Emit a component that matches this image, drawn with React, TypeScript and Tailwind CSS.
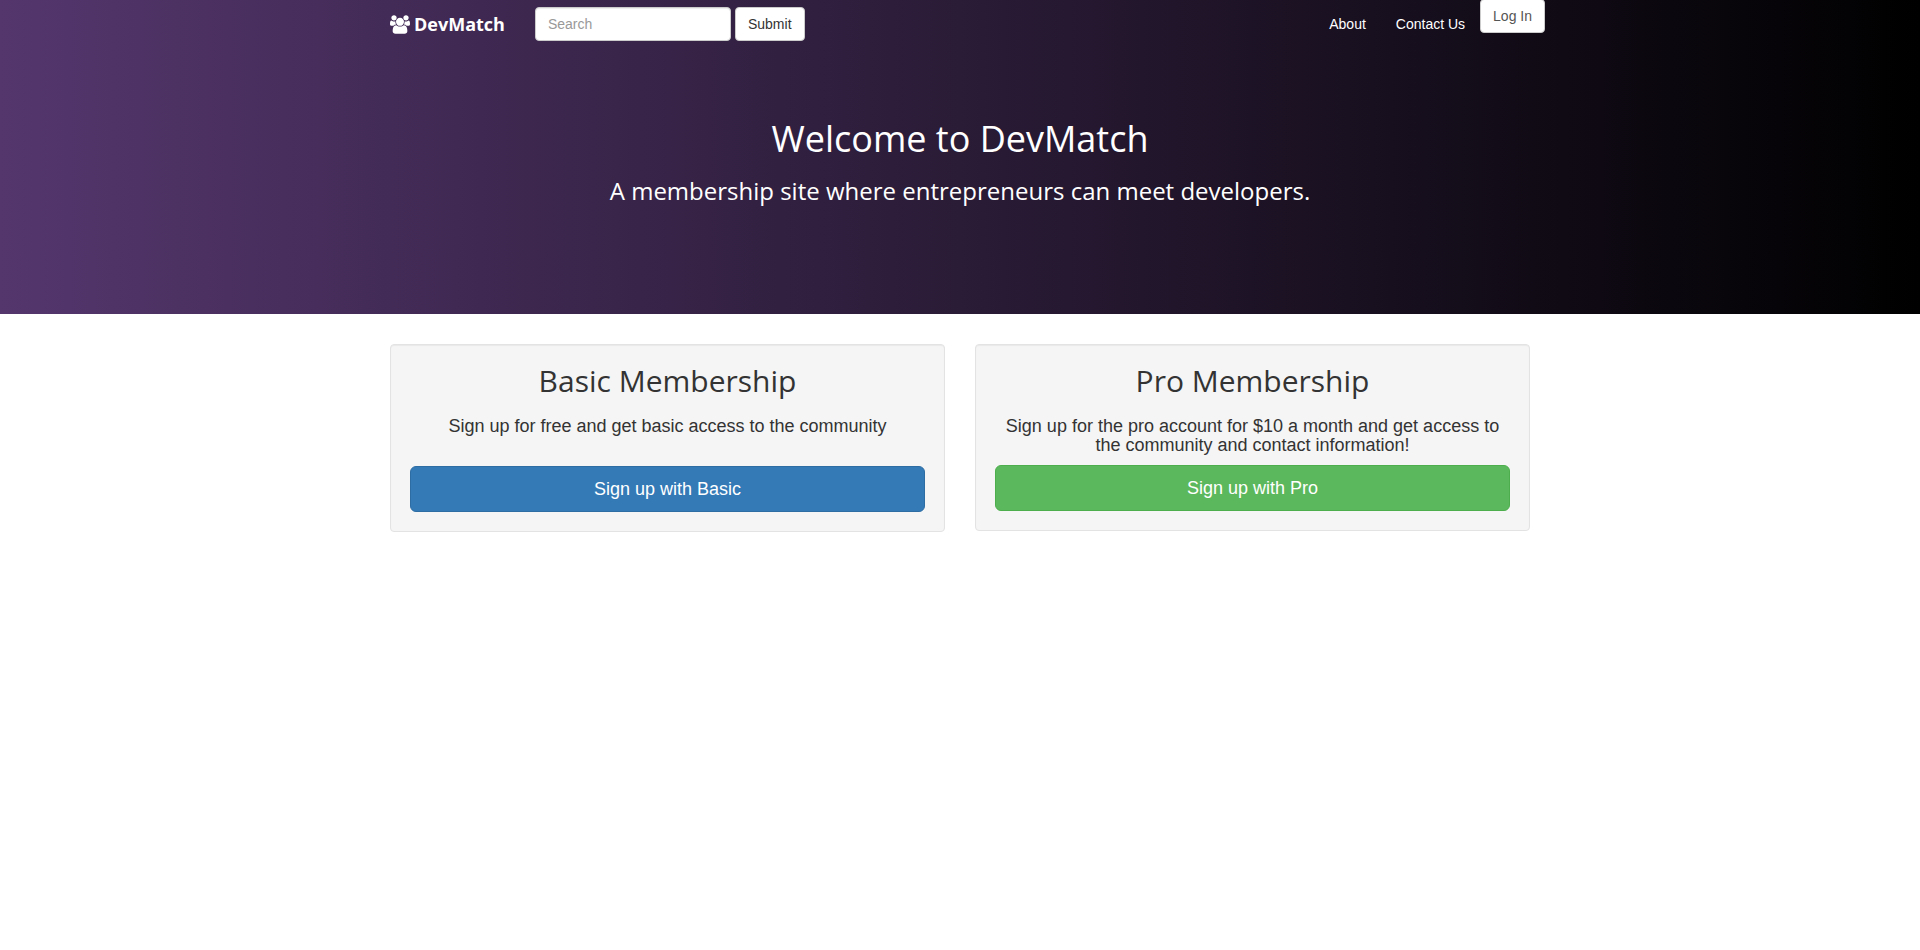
import React from "react";

const smallButton =
  "inline-block rounded-sm border border-[#cccccc] bg-white px-3 py-1.5 text-sm leading-5";

function UsersIcon() {
  return (
    <svg viewBox="0 0 1920 1792" className="h-[19px] w-5" fill="currentColor" aria-hidden="true">
      <path d="M593 896q-162 5-265 128h-134q-82 0-138-40.5t-56-118.5q0-353 124-353 6 0 43.5 21t97.5 42.5 119 21.5q67 0 133-23-5 37-5 66 0 139 81 256zM1664 1533q0 120-73 189.5t-194 69.5h-874q-121 0-194-69.5t-73-189.5q0-53 3.5-103.5t14-109 26.5-108.5 43-97.5 62-81 85.5-53.5 111.5-20q10 0 43 21.5t73 48 107 48 135 21.5 135-21.5 107-48 73-48 43-21.5q61 0 111.5 20t85.5 53.5 62 81 43 97.5 26.5 108.5 14 109 3.5 103.5zM640 256q0 106-75 181t-181 75-181-75-75-181 75-181 181-75 181 75 75 181zM1344 640q0 159-112.5 271.5t-271.5 112.5-271.5-112.5-112.5-271.5 112.5-271.5 271.5-112.5 271.5 112.5 112.5 271.5zM1920 865q0 78-56 118.5t-138 40.5h-134q-103-123-265-128 81-117 81-256 0-29-5-66 66 23 133 23 59 0 119-21.5t97.5-42.5 43.5-21q124 0 124 353zM1792 256q0 106-75 181t-181 75-181-75-75-181 75-181 181-75 181 75 75 181z" />
    </svg>
  );
}

type PlanProps = {
  title: string;
  text: string;
  action: string;
  textClass: string;
  buttonClass: string;
};

function Plan({ title, text, action, textClass, buttonClass }: PlanProps) {
  return (
    <section className="rounded-sm border border-[#e3e3e3] bg-[#f5f5f5] p-[19px] text-center shadow-[inset_0_1px_1px_rgba(0,0,0,0.05)]">
      <h2 className="mb-5 font-['Open_Sans',sans-serif] text-[30px] leading-[33px]">{title}</h2>
      <p className={`text-lg leading-[19px] ${textClass}`}>{text}</p>
      <a
        href="#"
        className={`block rounded-md border px-4 py-2.5 text-lg leading-6 text-white ${buttonClass}`}
      >
        {action}
      </a>
    </section>
  );
}

export default function App() {
  return (
    <div className="min-h-screen bg-white font-['Liberation_Sans',Arial,sans-serif] text-sm text-[#333333]">
      <header className="bg-[linear-gradient(to_right,#54366d,#000000)] pb-[108px] text-white">
        <nav className="mx-auto flex h-[50px] max-w-[1170px] items-start justify-between pl-[15px]">
          <div className="flex h-12 items-center">
            <a href="#" className="flex items-center gap-1 font-['Open_Sans',sans-serif] text-lg leading-5 font-bold">
              <UsersIcon />
              DevMatch
            </a>
            <form className="ml-[30px] flex gap-1" onSubmit={(e) => e.preventDefault()}>
              <input
                type="text"
                aria-label="Search"
                placeholder="Search"
                className="h-[34px] w-[196px] rounded-sm border border-[#cccccc] bg-white px-3 text-sm text-[#555555] shadow-[inset_0_1px_1px_rgba(0,0,0,0.075)] placeholder:text-[#999999]"
              />
              <button type="submit" className={`${smallButton} text-[#333333]`}>
                Submit
              </button>
            </form>
          </div>
          <div className="flex items-start">
            <a href="#" className="px-[15px] py-3.5 leading-5">About</a>
            <a href="#" className="px-[15px] py-3.5 leading-5">Contact Us</a>
            <a href="#" className={`${smallButton} -mt-px text-[#555555]`}>Log In</a>
          </div>
        </nav>
        <div className="px-4 pt-[69px] text-center font-['Open_Sans',sans-serif]">
          <h1 className="text-4xl leading-10">Welcome to DevMatch</h1>
          <p className="mt-[17px] text-2xl leading-[30px]">
            A membership site where entrepreneurs can meet developers.
          </p>
        </div>
      </header>
      <main className="mx-auto grid max-w-[1170px] items-start gap-[30px] px-[15px] pt-[30px] md:grid-cols-2">
        <Plan
          title="Basic Membership"
          text="Sign up for free and get basic access to the community"
          action="Sign up with Basic"
          textClass="mb-[30px]"
          buttonClass="border-[#2e6da4] bg-[#337ab7]"
        />
        <Plan
          title="Pro Membership"
          text="Sign up for the pro account for $10 a month and get access to the community and contact information!"
          action="Sign up with Pro"
          textClass="mb-2.5"
          buttonClass="border-[#4cae4c] bg-[#5cb85c]"
        />
      </main>
    </div>
  );
}
